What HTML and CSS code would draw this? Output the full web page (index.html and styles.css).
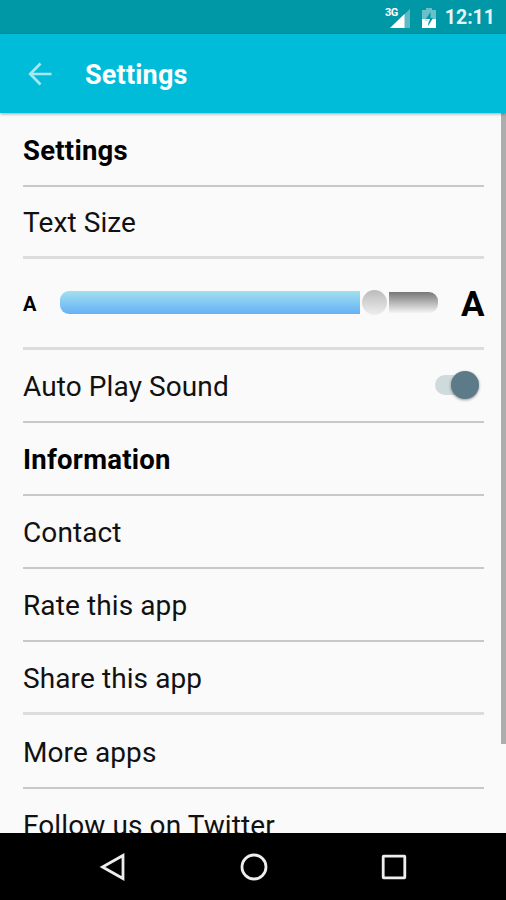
FILE: index.html
```html
<!DOCTYPE html>
<html lang="en">
<head>
    <meta charset="UTF-8">
    <meta name="viewport" content="width=device-width, initial-scale=1.0">
    <title>Settings</title>
    <link rel="stylesheet" href="styles.css">
</head>
<body>
    <div class="status-bar">
        <svg class="signal" width="26" height="24" viewBox="0 0 26 24">
            <path d="M25 3V22H5Z" fill="#5cbac3"/>
            <path d="M19.5 8V22H5Z" fill="#fff"/>
            <text x="0" y="10" class="network">3G</text>
        </svg>
        <svg class="battery" width="14" height="22" viewBox="0 0 14 22">
            <path d="M4 1H10V3H14V12H0V3H4Z" fill="#69c0c8"/>
            <path d="M0 12H14V21H0Z" fill="#fff"/>
            <path d="M8.5 5L3 13.5H6.2V19L11 11H8.5Z" fill="#0097a7"/>
            <path d="M6.2 13.5H3L4.5 12H8L6.2 17Z" fill="#fff"/>
        </svg>
        <span class="clock">12:11</span>
    </div>

    <header class="app-bar">
        <svg class="back" width="24" height="24" viewBox="0 0 24 24">
            <path d="M12.5 1.5L2.2 12L12.5 22.5M2.2 12H23.5" fill="none" stroke="#a5e8f1" stroke-width="2.7"/>
        </svg>
        <h1>Settings</h1>
    </header>

    <main class="content">
        <div class="row heading">Settings</div>
        <div class="row text-size thick">Text Size</div>
        <div class="row slider-row thick">
            <span class="small-a">A</span>
            <div class="slider">
                <div class="filled"></div>
                <div class="thumb"></div>
                <div class="rest"></div>
            </div>
            <span class="big-a">A</span>
        </div>
        <div class="row sound">
            <span>Auto Play Sound</span>
            <div class="switch"><div class="knob"></div></div>
        </div>
        <div class="row heading info">Information</div>
        <div class="row">Contact</div>
        <div class="row">Rate this app</div>
        <div class="row thick">Share this app</div>
        <div class="row">More apps</div>
        <div class="row">Follow us on Twitter</div>
        <div class="scrollbar"></div>
    </main>

    <nav class="nav-bar">
        <svg width="28" height="28" viewBox="0 0 28 28">
            <path d="M24 2.5V25.5L3.5 14Z"/>
        </svg>
        <svg width="28" height="28" viewBox="0 0 28 28">
            <circle cx="14" cy="14" r="12"/>
        </svg>
        <svg width="28" height="28" viewBox="0 0 28 28">
            <rect x="3.2" y="3.2" width="21.6" height="21.6" rx="0.5"/>
        </svg>
    </nav>
</body>
</html>
```
FILE: styles.css
```css
* {
    box-sizing: border-box;
}
body {
    margin: 0;
    height: 900px;
    display: flex;
    flex-direction: column;
    overflow: hidden;
    font-family: Roboto, sans-serif;
    background: #fafafa;
    color: #111;
}
.status-bar {
    height: 34px;
    flex: none;
    display: flex;
    justify-content: flex-end;
    align-items: center;
    padding-right: 11px;
    background: #0097a7;
    color: #e5f5f6;
}
.signal {
    margin: 2px 11px 0 0;
}
.network {
    font-size: 11px;
    font-weight: bold;
    fill: #fff;
    letter-spacing: -0.5px;
}
.battery {
    margin: 2px 9px 0 0;
}
.clock {
    font-size: 19.5px;
    font-weight: bold;
    line-height: 34px;
    padding-top: 2px;
}
.app-bar {
    height: 79px;
    flex: none;
    display: flex;
    align-items: center;
    padding-left: 28px;
    background: #00bcd9;
    color: #fff;
    position: relative;
    z-index: 1;
    box-shadow: 0 1px 3px rgba(0, 0, 0, 0.35);
}
.app-bar h1 {
    margin: 2px 0 0 33px;
    font-size: 27px;
    font-weight: bold;
    letter-spacing: 0.2px;
}
.content {
    flex: 1;
    min-height: 0;
    overflow: hidden;
    position: relative;
    padding: 0 22px 0 23px;
}
.row {
    height: 73.2px;
    display: flex;
    align-items: center;
    padding-top: 2px;
    border-bottom: 2px solid #c8c8c8;
    font-size: 28px;
    letter-spacing: 0.1px;
}
.heading {
    height: 74px;
    font-weight: bold;
    font-size: 27.5px;
    letter-spacing: 0.25px;
    color: #000;
}
.info {
    height: 73.2px;
}
.text-size {
    height: 71.5px;
}
.thick {
    border-bottom: 3px solid #dcdcdc;
}
.slider-row {
    height: 91px;
    justify-content: space-between;
    color: #000;
    font-weight: bold;
}
.small-a {
    font-size: 20px;
    width: 37px;
}
.big-a {
    font-size: 35px;
    width: 23px;
    padding-top: 2px;
}
.slider {
    width: 378px;
    display: flex;
    align-items: center;
    margin: 0 auto 2px 0;
}
.filled {
    width: 301px;
    height: 23px;
    border-radius: 9px 0 0 9px;
    background: linear-gradient(#a2e0ef, #64b1f7);
}
.thumb {
    width: 25px;
    height: 25px;
    margin: 0 2px;
    border-radius: 50%;
    background: linear-gradient(#bbb, #eee);
}
.rest {
    width: 49px;
    height: 21px;
    border-radius: 0 9px 9px 0;
    background: linear-gradient(#777, #f4f4f4);
}
.sound {
    justify-content: space-between;
}
.switch {
    width: 44px;
    height: 20px;
    margin: 0 5px 2px 0;
    display: flex;
    align-items: center;
    justify-content: flex-end;
    border-radius: 10px;
    background: #cfdadd;
}
.knob {
    width: 28px;
    height: 28px;
    flex: none;
    border-radius: 50%;
    background: #5d7a88;
    box-shadow: 0 1px 3px rgba(0, 0, 0, 0.4);
}
.scrollbar {
    position: absolute;
    top: 0;
    right: 0;
    width: 5px;
    height: 631px;
    background: #adadad;
}
.nav-bar {
    height: 67px;
    flex: none;
    display: flex;
    justify-content: center;
    align-items: center;
    gap: 112.5px;
    padding-left: 1px;
    background: #000;
}
.nav-bar svg {
    fill: none;
    stroke: #eee;
    stroke-width: 2.8;
}
```
